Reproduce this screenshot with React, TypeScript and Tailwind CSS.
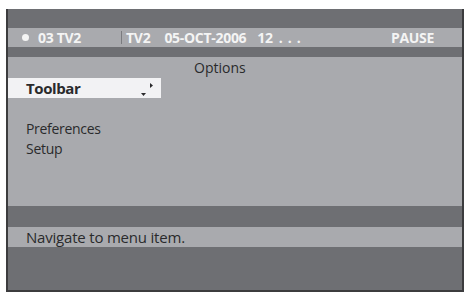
export default function App() {
  const font = { fontFamily: '"Open Sans", "Noto Sans", sans-serif' };
  return (
    <div className="w-[465px] h-[293px] bg-white pt-[9px] pl-[6px]" style={font}>
      <div className="w-[458px] h-[283px] border-x-2 border-b-2 border-[#3c3c3e] flex flex-col bg-[#6e6f73]">
        <div className="h-[19px] shrink-0" />
        <div className="h-[19px] shrink-0 bg-[#a9aaae] flex items-center text-[14px] font-bold text-[#f4f4f4] tracking-[-0.3px] leading-none relative">
          <span className="w-[7px] h-[7px] rounded-full bg-[#f4f4f4] ml-[14px]" />
          <span className="ml-[9px]">03 TV2</span>
          <span className="ml-[40px] w-[1px] h-[13px] bg-[#7a7b7f]" />
          <span className="ml-[4px]">TV2</span>
          <span className="ml-[14px]">05-OCT-2006</span>
          <span className="ml-[11px]">12</span>
          <span className="ml-[6px] tracking-[5px]">...</span>
          <span className="ml-auto mr-[28px]">PAUSE</span>
        </div>
        <div className="h-[10px] shrink-0" />
        <div className="h-[149px] shrink-0 bg-[#a9aaae] flex flex-col text-[#2a2a2c]">
          <div className="h-[21px] flex items-center text-[14px] leading-none pl-[186px]">Options</div>
          <div className="h-[20px] w-[153px] bg-[#f2f2f4] flex items-center relative">
            <span className="ml-[18px] text-[15px] font-bold leading-none tracking-[-0.4px]">Toolbar</span>
            <svg className="absolute left-[132px] top-[3px]" width="16" height="16" viewBox="0 0 16 16">
              <polygon points="1,12 6,12 3.5,15" fill="#2a2a2c" />
              <polygon points="10,2 10,7 13,4.5" fill="#2a2a2c" />
            </svg>
          </div>
          <div className="h-[21px]" />
          <div className="h-[20px] flex items-center pl-[18px] text-[14px] leading-none tracking-[-0.3px]">Preferences</div>
          <div className="h-[20px] flex items-center pl-[18px] text-[14px] leading-none tracking-[-0.3px]">Setup</div>
        </div>
        <div className="h-[21px] shrink-0" />
        <div className="h-[20px] shrink-0 bg-[#a9aaae] flex items-center pl-[18px] text-[15px] leading-none text-[#2a2a2c] tracking-[-0.2px]">
          Navigate to menu item.
        </div>
        <div className="flex-1" />
      </div>
    </div>
  );
}
